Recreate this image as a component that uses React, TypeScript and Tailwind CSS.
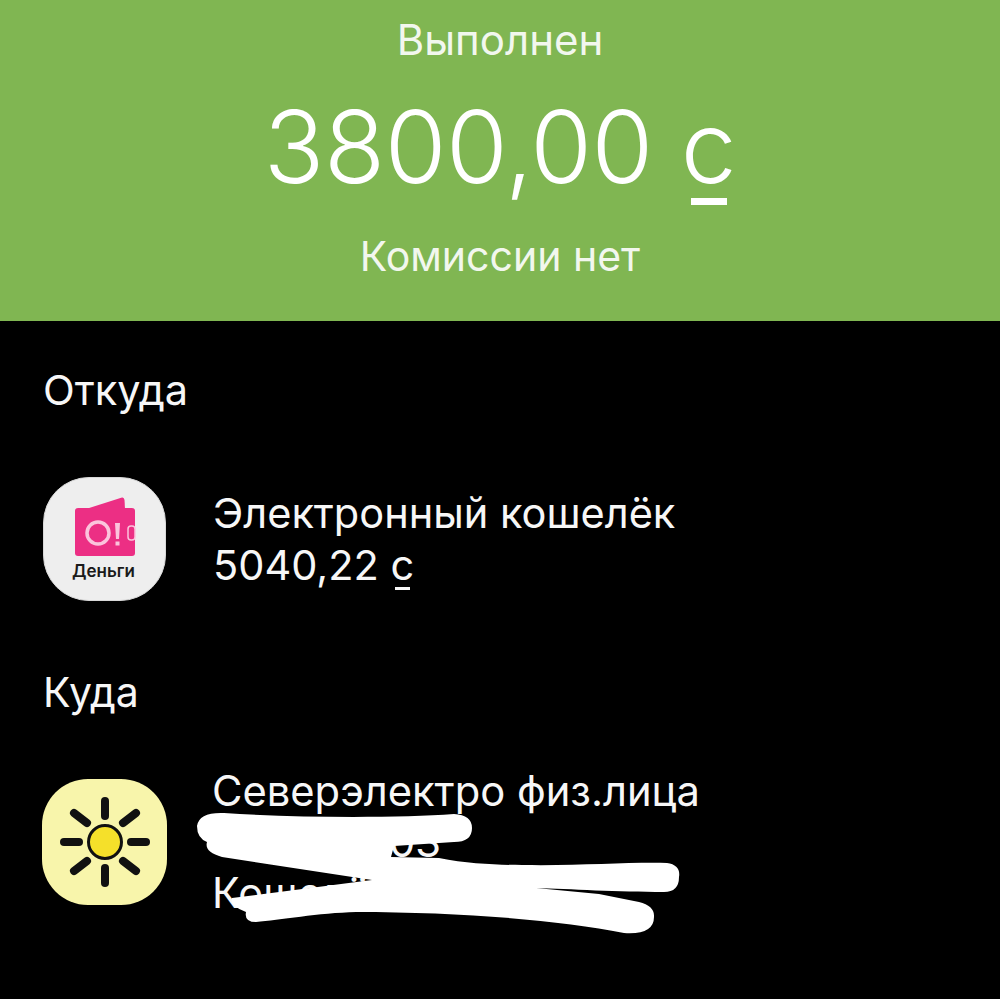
import React from 'react';

const Som: React.FC<{ barClass: string }> = ({ barClass }) => (
  <span className="relative inline-block">
    с
    <span className={`absolute bg-current ${barClass}`}></span>
  </span>
);

const WalletIcon: React.FC = () => (
  <div className="w-[123px] h-[124px] rounded-[46px] bg-[#eeeeee] flex flex-col items-center flex-shrink-0 border border-[#d8d8d8]">
    <svg width="62" height="62" viewBox="0 0 62 62" className="mt-[18px]">
      <path d="M12 13 L48 1.5 Q50 1 50.5 4 L51 13 Z" fill="#ec2f84" />
      <rect x="1" y="12" width="60" height="48" rx="3" fill="#ec2f84" />
      <circle cx="24" cy="37" r="11" fill="none" stroke="#fbc4dc" strokeWidth="3.5" />
      <path d="M41 27 H46 L45 43 H42 Z" fill="#fbc4dc" />
      <rect x="41.5" y="45.5" width="4" height="4" fill="#fbc4dc" />
      <rect x="54" y="30" width="7" height="14" rx="3" fill="#ec2f84" stroke="#fbc4dc" strokeWidth="1.5" />
    </svg>
    <span className="text-[17px] leading-[20px] font-semibold text-[#1a1a1a] mt-[3px] -ml-[2px]">Деньги</span>
  </div>
);

const SunIcon: React.FC = () => (
  <div className="w-[125px] h-[126px] -ml-[1px] rounded-[46px] bg-[#f8f5ab] flex items-center justify-center flex-shrink-0">
    <svg width="94" height="94" viewBox="0 0 94 94" fill="none">
      <g stroke="#111111" strokeWidth="8" strokeLinecap="round">
        <path d="M47 6 V21" />
        <path d="M47 73 V88" />
        <path d="M6 47 H21" />
        <path d="M73 47 H88" />
        <path d="M16 18 L29 28" />
        <path d="M78 18 L65 28" />
        <path d="M16 76 L29 66" />
        <path d="M78 76 L65 66" />
      </g>
      <circle cx="47" cy="47" r="16.5" fill="#f5e02a" stroke="#111111" strokeWidth="3" />
    </svg>
  </div>
);

const App: React.FC = () => {
  return (
    <div className="w-[1000px] h-[999px] bg-black text-[#f7f7f7] font-['Inter',sans-serif] overflow-hidden">
      {/* Header */}
      <section className="h-[321px] bg-[#80b652] flex flex-col items-center text-white">
        <p className="mt-[16px] text-[42px] leading-[48px] opacity-90">Выполнен</p>
        <p className="mt-[28px] text-[100px] leading-[110px] font-[350] tracking-[-0.4px]">
          3800,00 <Som barClass="left-[10px] right-[9px] bottom-[-3px] h-[7px]" />
        </p>
        <p className="mt-[30px] text-[41px] leading-[48px] opacity-90">Комиссии нет</p>
      </section>

      <div className="pl-[43px]">
        <h3 className="mt-[45px] text-[41.5px] leading-[48px]">Откуда</h3>

        <div className="mt-[63px] flex items-center gap-[47px]">
          <WalletIcon />
          <div className="text-[41.5px] leading-[52px]">
            <p>Электронный кошелёк</p>
            <p>
              5040,22 <Som barClass="left-[4px] right-[4px] bottom-[1px] h-[3px]" />
            </p>
          </div>
        </div>

        <h3 className="mt-[67px] text-[41px] leading-[48px]">Куда</h3>

        <div className="mt-[63px] flex items-start gap-[45px]">
          <SunIcon />
          <div className="relative -mt-[13px] text-[41.7px] leading-[51px]">
            <p>Северэлектро физ.лица</p>
            <p className="pl-[177px]">03</p>
            <p>Кошелёк</p>
            {/* замазка поверх текста */}
            <svg className="absolute left-[-20px] top-[42px]" width="520" height="140" viewBox="193 808 520 140">
              <path
                fill="#ffffff"
                d="M198 826 Q200 812 225 813 C300 818 400 818 455 814 Q473 815 473 828 Q473 842 455 842 L395 846 L392 857 L440 858 C470 864 500 865 523 865 C580 866 630 862 668 863 Q682 865 680 877 Q680 892 665 892 C620 892 570 889 537 888 L600 894 L640 902 Q656 906 655 917 Q655 935 625 933 C560 920 460 912 357 912 C320 913 280 920 257 922 Q245 922 247 912 Q230 906 233 898 L373 880 L223 857 Q205 852 208 842 Q198 838 198 826 Z"
              />
            </svg>
          </div>
        </div>
      </div>
    </div>
  );
};

export default App;
